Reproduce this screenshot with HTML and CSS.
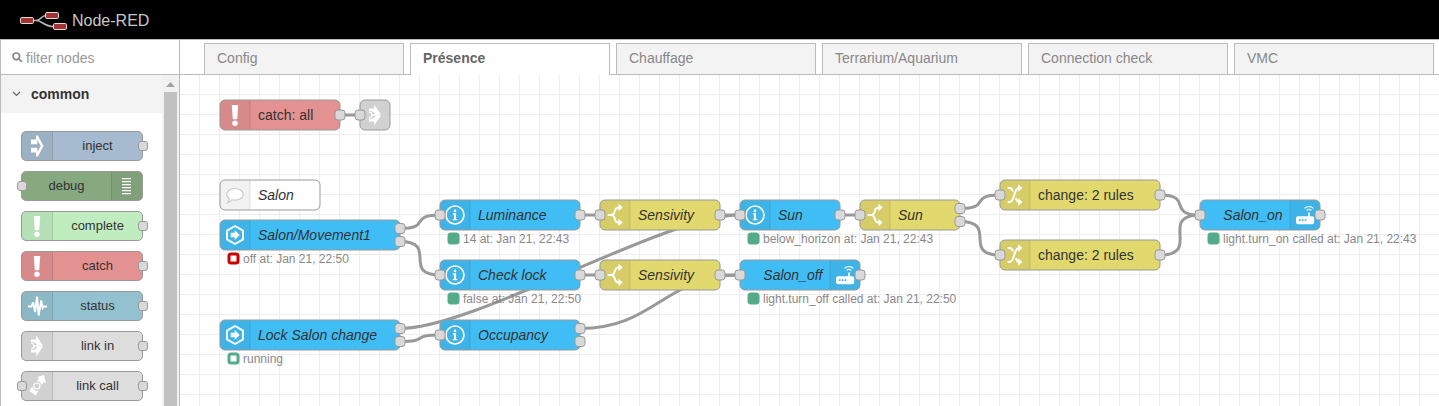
FILE: index.html
```html
<!DOCTYPE html>
<html lang="en">
<head>
<meta charset="utf-8">
<title>Node-RED</title>
<link rel="stylesheet" href="styles.css">
</head>
<body>
<svg class="defs" width="0" height="0" aria-hidden="true">
  <symbol id="i-inject" viewBox="0 0 30 30"><path fill-rule="evenodd" d="M9 8.500H14V4.500h1.800L21.500 15 15.800 25.500H14V21.500H9V16.800H15.300V21L18.900 15 15.300 9V13.200H9z"/></symbol>
  <symbol id="i-debug" viewBox="0 0 30 30"><path d="M10 7h9v1.200h-9zM10 10h9v1.200h-9zM10 13h9v1.200h-9zM10 16h9v1.200h-9zM10 19h9v1.200h-9zM10 22h9v1.200h-9z"/></symbol>
  <symbol id="i-bang" viewBox="0 0 30 30"><path d="M11.800 5h6.400l-1 14.200h-4.400z"/><circle cx="15" cy="23.300" r="2.700"/></symbol>
  <symbol id="i-status" viewBox="0 0 30 30"><path class="ln" stroke-width="1.900" stroke-linejoin="miter" stroke-miterlimit="3" d="M6 15.500h3.500l1.800-4 1.800 9.500 2-15.500 1.500 19 2.600-15 1.400 7.500 1-1.500h3.400"/></symbol>
  <symbol id="i-link" viewBox="0 0 30 30"><path d="M9 8.500h5.300v-4L20.700 14.300H15.300C14.700 12 12.500 10.900 9 10.900zM9 21.500h5.300v4L20.700 15.700H15.300C14.700 18 12.500 19.100 9 19.100z"/><path class="ln" stroke-width="1.300" d="M9 12.100a2.900 2.900 0 0 1 0 5.800M11.900 15h8.500"/></symbol>
  <symbol id="i-call" viewBox="0 0 30 30"><path d="M14.700 6.200l7.300-2.200 2 8.200-2.200-1.200-2.300 3.600a4.800 4.800 0 0 0-4.600-4.400l2.300-3.100zM7.500 20l2.900-4.700a4.700 4.700 0 0 0 6.100 4.200L13.700 24.600z"/><circle class="ln" stroke-width="1.200" cx="14.900" cy="15" r="3"/></symbol>
  <symbol id="i-comment" viewBox="0 0 30 30"><path fill="#fff" stroke="#ccc" stroke-width="1.200" d="M15 8.500c4.500 0 8.300 2.500 8.300 5.800s-3.800 5.800-8.300 5.800c-1 0-2-.1-2.800-.4-1 1.400-2.800 3-4.800 3.300 1-1.300 1.700-2.700 1.800-4.500-1.500-1-2.500-2.500-2.500-4.200 0-3.300 3.800-5.800 8.300-5.800z"/></symbol>
  <symbol id="i-hex" viewBox="0 0 30 30"><path class="ln" stroke-width="2" stroke-linejoin="round" d="M15 6l8 4.600v8.800L15 24l-8-4.600v-8.800z"/><path d="M10.700 12.700h4V10l5 5-5 5v-2.700h-4z"/></symbol>
  <symbol id="i-info" viewBox="0 0 30 30"><circle class="ln" stroke-width="1.600" cx="15" cy="15" r="9"/><circle cx="15" cy="10.900" r="1.300"/><path d="M12.800 13.300h3.300v5.600h1.200v1.300h-4.600v-1.300h1.200v-4.300h-1.100z"/></symbol>
  <symbol id="i-switch" viewBox="0 0 30 30"><path class="ln" stroke-width="2" d="M7.700 15H12c2.600-1 2.600-3 3.100-4.700.5-1.900 1.400-2.800 4-2.800M12 15c2.600 1 2.600 3 3.100 4.700.5 1.900 1.400 2.800 4 2.800"/><path d="M18.500 3.700l4.200 3.800-4.200 3.800zM18.500 18.700l4.200 3.800-4.200 3.800z"/></symbol>
  <symbol id="i-change" viewBox="0 0 30 30"><path class="ln" stroke-width="2" d="M7.700 8H9.500c2 0 3 1.500 3.500 3.500M16 18c.5 2.500 1.200 4 3.200 4M7.700 22H9.500c5.500 0 4-14 9.500-14"/><path d="M18.200 4.200l4.200 3.800-4.200 3.800zM18.200 18.200l4.200 3.800-4.200 3.800z"/></symbol>
  <symbol id="i-router" viewBox="0 0 30 30"><path fill-rule="evenodd" d="M8 16.300h10.200V12.500h1.600v3.800h2.400a2 2 0 0 1 2 2v4a2 2 0 0 1-2 2H8a2 2 0 0 1-2-2v-4a2 2 0 0 1 2-2zM8.900 19.300v1.700h1.700v-1.700zM11.800 19.300v1.700h1.700v-1.700zM14.700 19.300v1.700h1.700v-1.700z"/><path class="ln" stroke-width="1.100" d="M16.600 10.500a3.200 3.200 0 0 1 4.800 0M14.500 8.400a6.200 6.200 0 0 1 9 0"/></symbol>
</svg>

<header class="header">
  <svg class="logo" width="48" height="20" viewBox="0 0 48 20">
    <path class="logo-wire" d="M13 10.500h3c5 0 5-5 10-5M16 10.500c7 0 7 6 18 6"/>
    <g class="logo-box">
      <rect x="0.500" y="7.500" width="13" height="6" rx="1.300"/>
      <rect x="25.500" y="2.500" width="13" height="6" rx="1.300"/>
      <rect x="33.500" y="13.500" width="13" height="6" rx="1.300"/>
    </g>
  </svg>
  <span class="brand">Node-RED</span>
</header>

<div class="main">
  <aside class="palette">
    <div class="search">
      <svg width="11" height="11" viewBox="0 0 11 11"><circle cx="4.300" cy="4.300" r="3.300"/><path d="M6.800 6.800l3 3"/></svg>
      <span>filter nodes</span>
    </div>
    <div class="palette-body">
      <div class="palette-list">
        <div class="category">
          <svg width="9" height="6" viewBox="0 0 9 6"><path d="M1 1l3.500 3.500L8 1"/></svg>
          <span>common</span>
        </div>
        <div class="items">
          <div class="item inject"><span class="ic"><svg><use href="#i-inject"/></svg></span><span class="lb">inject</span><i class="port out"></i></div>
          <div class="item debug"><span class="lb">debug</span><span class="ic right"><svg><use href="#i-debug"/></svg></span><i class="port in"></i></div>
          <div class="item complete"><span class="ic"><svg><use href="#i-bang"/></svg></span><span class="lb">complete</span><i class="port out"></i></div>
          <div class="item catch"><span class="ic"><svg><use href="#i-bang"/></svg></span><span class="lb">catch</span><i class="port out"></i></div>
          <div class="item status"><span class="ic"><svg><use href="#i-status"/></svg></span><span class="lb">status</span><i class="port out"></i></div>
          <div class="item link"><span class="ic"><svg><use href="#i-link"/></svg></span><span class="lb">link in</span><i class="port out"></i></div>
          <div class="item link"><span class="ic"><svg><use href="#i-call"/></svg></span><span class="lb">link call</span><i class="port in"></i><i class="port out"></i></div>
        </div>
      </div>
      <div class="scrollbar"><svg width="9" height="5" viewBox="0 0 9 5"><path d="M4.500 0L9 5H0z"/></svg><div class="thumb"></div></div>
    </div>
  </aside>

  <section class="workspace">
    <nav class="tabs">
      <div class="tab">Config</div>
      <div class="tab active">Présence</div>
      <div class="tab">Chauffage</div>
      <div class="tab">Terrarium/Aquarium</div>
      <div class="tab">Connection check</div>
      <div class="tab">VMC</div>
    </nav>
    <svg class="canvas" width="1259" height="331" viewBox="180 75 1259 331">
      <defs>
        <pattern id="grid" x="180" y="75" width="20" height="20" patternUnits="userSpaceOnUse"><path class="grid" d="M19 0h1v20h-1zM0 19h19v1H0z"/></pattern>
      </defs>
      <rect x="180" y="75" width="1259" height="331" fill="url(#grid)"/>
      <g class="wires">
        <path d="M340 115C355 115 345 115 360 115"/>
        <path d="M400 228.500C431.600 228.500 408.400 215 440 215"/>
        <path d="M400 241.500C439 241.500 401 275 440 275"/>
        <path d="M400 328.500C475 328.500 665 215 740 215"/>
        <path d="M400 341.500C430.400 341.500 409.600 335 440 335"/>
        <path d="M580 215H600M580 275H600M720 215H740M720 275H740M840 215H860"/>
        <path d="M580 328.500C655 328.500 665 275 740 275"/>
        <path d="M960 208.500C991.600 208.500 968.400 195 1000 195"/>
        <path d="M960 221.500C999 221.500 961 255 1000 255"/>
        <path d="M1160 195C1193.500 195 1166.500 215 1200 215"/>
        <path d="M1160 255C1202.400 255 1157.600 215 1200 215"/>
      </g>

      <g class="node" transform="translate(220 100)">
        <rect class="box c-catch" width="120" height="30" rx="5"/><path class="shade" d="M5 .5H30v29H5A4.500 4.500 0 0 1 .5 25V5A4.500 4.500 0 0 1 5 .5z"/><path class="sep" d="M30 .5v29"/>
        <use href="#i-bang" width="30" height="30"/><text x="38" y="20">catch: all</text>
        <rect class="pt" x="115" y="10" width="10" height="10" rx="3"/>
      </g>
      <g class="node" transform="translate(360 100)">
        <rect class="box c-link" width="30" height="30" rx="5"/><rect class="shade" x=".5" y=".5" width="29" height="29" rx="4.500"/>
        <use href="#i-link" width="30" height="30"/>
        <rect class="pt" x="-5" y="10" width="10" height="10" rx="3"/>
      </g>
      <g class="node named" transform="translate(220 180)">
        <rect class="box c-comment" width="100" height="30" rx="5"/><path class="shade" d="M5 .5H30v29H5A4.500 4.500 0 0 1 .5 25V5A4.500 4.500 0 0 1 5 .5z"/><path class="sep" d="M30 .5v29"/>
        <use href="#i-comment" width="30" height="30"/><text x="38" y="20">Salon</text>
      </g>
      <g class="node named" transform="translate(220 220)">
        <rect class="box c-ha" width="180" height="30" rx="5"/><path class="shade" d="M5 .5H30v29H5A4.500 4.500 0 0 1 .5 25V5A4.500 4.500 0 0 1 5 .5z"/><path class="sep" d="M30 .5v29"/>
        <use href="#i-hex" width="30" height="30"/><text x="38" y="20">Salon/Movement1</text>
        <rect class="pt" x="175" y="3.500" width="10" height="10" rx="3"/><rect class="pt" x="175" y="16.500" width="10" height="10" rx="3"/>
        <rect class="dot ring red" x="9" y="34" width="9" height="9" rx="2"/><text class="st" x="23" y="43">off at: Jan 21, 22:50</text>
      </g>
      <g class="node named" transform="translate(220 320)">
        <rect class="box c-ha" width="180" height="30" rx="5"/><path class="shade" d="M5 .5H30v29H5A4.500 4.500 0 0 1 .5 25V5A4.500 4.500 0 0 1 5 .5z"/><path class="sep" d="M30 .5v29"/>
        <use href="#i-hex" width="30" height="30"/><text x="38" y="20">Lock Salon change</text>
        <rect class="pt" x="175" y="3.500" width="10" height="10" rx="3"/><rect class="pt" x="175" y="16.500" width="10" height="10" rx="3"/>
        <rect class="dot ring" x="9" y="34" width="9" height="9" rx="2"/><text class="st" x="23" y="43">running</text>
      </g>
      <g class="node named" transform="translate(440 200)">
        <rect class="box c-ha" width="140" height="30" rx="5"/><path class="shade" d="M5 .5H30v29H5A4.500 4.500 0 0 1 .5 25V5A4.500 4.500 0 0 1 5 .5z"/><path class="sep" d="M30 .5v29"/>
        <use href="#i-info" width="30" height="30"/><text x="38" y="20">Luminance</text>
        <rect class="pt" x="-5" y="10" width="10" height="10" rx="3"/><rect class="pt" x="135" y="10" width="10" height="10" rx="3"/>
        <rect class="dot" x="9" y="34" width="9" height="9" rx="2"/><text class="st" x="23" y="43">14 at: Jan 21, 22:43</text>
      </g>
      <g class="node named" transform="translate(440 260)">
        <rect class="box c-ha" width="140" height="30" rx="5"/><path class="shade" d="M5 .5H30v29H5A4.500 4.500 0 0 1 .5 25V5A4.500 4.500 0 0 1 5 .5z"/><path class="sep" d="M30 .5v29"/>
        <use href="#i-info" width="30" height="30"/><text x="38" y="20">Check lock</text>
        <rect class="pt" x="-5" y="10" width="10" height="10" rx="3"/><rect class="pt" x="135" y="10" width="10" height="10" rx="3"/>
        <rect class="dot" x="9" y="34" width="9" height="9" rx="2"/><text class="st" x="23" y="43">false at: Jan 21, 22:50</text>
      </g>
      <g class="node named" transform="translate(440 320)">
        <rect class="box c-ha" width="140" height="30" rx="5"/><path class="shade" d="M5 .5H30v29H5A4.500 4.500 0 0 1 .5 25V5A4.500 4.500 0 0 1 5 .5z"/><path class="sep" d="M30 .5v29"/>
        <use href="#i-info" width="30" height="30"/><text x="38" y="20">Occupancy</text>
        <rect class="pt" x="-5" y="10" width="10" height="10" rx="3"/><rect class="pt" x="135" y="3.500" width="10" height="10" rx="3"/><rect class="pt" x="135" y="16.500" width="10" height="10" rx="3"/>
      </g>
      <g class="node named" transform="translate(600 200)">
        <rect class="box c-fn" width="120" height="30" rx="5"/><path class="shade" d="M5 .5H30v29H5A4.500 4.500 0 0 1 .5 25V5A4.500 4.500 0 0 1 5 .5z"/><path class="sep" d="M30 .5v29"/>
        <use href="#i-switch" width="30" height="30"/><text x="38" y="20">Sensivity</text>
        <rect class="pt" x="-5" y="10" width="10" height="10" rx="3"/><rect class="pt" x="115" y="10" width="10" height="10" rx="3"/>
      </g>
      <g class="node named" transform="translate(600 260)">
        <rect class="box c-fn" width="120" height="30" rx="5"/><path class="shade" d="M5 .5H30v29H5A4.500 4.500 0 0 1 .5 25V5A4.500 4.500 0 0 1 5 .5z"/><path class="sep" d="M30 .5v29"/>
        <use href="#i-switch" width="30" height="30"/><text x="38" y="20">Sensivity</text>
        <rect class="pt" x="-5" y="10" width="10" height="10" rx="3"/><rect class="pt" x="115" y="10" width="10" height="10" rx="3"/>
      </g>
      <g class="node named" transform="translate(740 200)">
        <rect class="box c-ha" width="100" height="30" rx="5"/><path class="shade" d="M5 .5H30v29H5A4.500 4.500 0 0 1 .5 25V5A4.500 4.500 0 0 1 5 .5z"/><path class="sep" d="M30 .5v29"/>
        <use href="#i-info" width="30" height="30"/><text x="38" y="20">Sun</text>
        <rect class="pt" x="-5" y="10" width="10" height="10" rx="3"/><rect class="pt" x="95" y="10" width="10" height="10" rx="3"/>
        <rect class="dot" x="9" y="34" width="9" height="9" rx="2"/><text class="st" x="23" y="43">below_horizon at: Jan 21, 22:43</text>
      </g>
      <g class="node named" transform="translate(740 260)">
        <rect class="box c-ha" width="120" height="30" rx="5"/><path class="shade" d="M90 .5h25a4.500 4.500 0 0 1 4.500 4.500v20a4.500 4.500 0 0 1-4.500 4.500H90z"/><path class="sep" d="M90 .5v29"/>
        <use href="#i-router" x="90" width="30" height="30"/><text class="end" x="82.500" y="20">Salon_off</text>
        <rect class="pt" x="-5" y="10" width="10" height="10" rx="3"/><rect class="pt" x="115" y="10" width="10" height="10" rx="3"/>
        <rect class="dot" x="9" y="34" width="9" height="9" rx="2"/><text class="st" x="23" y="43">light.turn_off called at: Jan 21, 22:50</text>
      </g>
      <g class="node named" transform="translate(860 200)">
        <rect class="box c-fn" width="100" height="30" rx="5"/><path class="shade" d="M5 .5H30v29H5A4.500 4.500 0 0 1 .5 25V5A4.500 4.500 0 0 1 5 .5z"/><path class="sep" d="M30 .5v29"/>
        <use href="#i-switch" width="30" height="30"/><text x="38" y="20">Sun</text>
        <rect class="pt" x="-5" y="10" width="10" height="10" rx="3"/><rect class="pt" x="95" y="3.500" width="10" height="10" rx="3"/><rect class="pt" x="95" y="16.500" width="10" height="10" rx="3"/>
      </g>
      <g class="node" transform="translate(1000 180)">
        <rect class="box c-fn" width="160" height="30" rx="5"/><path class="shade" d="M5 .5H30v29H5A4.500 4.500 0 0 1 .5 25V5A4.500 4.500 0 0 1 5 .5z"/><path class="sep" d="M30 .5v29"/>
        <use href="#i-change" width="30" height="30"/><text x="38" y="20">change: 2 rules</text>
        <rect class="pt" x="-5" y="10" width="10" height="10" rx="3"/><rect class="pt" x="155" y="10" width="10" height="10" rx="3"/>
      </g>
      <g class="node" transform="translate(1000 240)">
        <rect class="box c-fn" width="160" height="30" rx="5"/><path class="shade" d="M5 .5H30v29H5A4.500 4.500 0 0 1 .5 25V5A4.500 4.500 0 0 1 5 .5z"/><path class="sep" d="M30 .5v29"/>
        <use href="#i-change" width="30" height="30"/><text x="38" y="20">change: 2 rules</text>
        <rect class="pt" x="-5" y="10" width="10" height="10" rx="3"/><rect class="pt" x="155" y="10" width="10" height="10" rx="3"/>
      </g>
      <g class="node named" transform="translate(1200 200)">
        <rect class="box c-ha" width="120" height="30" rx="5"/><path class="shade" d="M90 .5h25a4.500 4.500 0 0 1 4.500 4.500v20a4.500 4.500 0 0 1-4.500 4.500H90z"/><path class="sep" d="M90 .5v29"/>
        <use href="#i-router" x="90" width="30" height="30"/><text class="end" x="82.500" y="20">Salon_on</text>
        <rect class="pt" x="-5" y="10" width="10" height="10" rx="3"/><rect class="pt" x="115" y="10" width="10" height="10" rx="3"/>
        <rect class="dot" x="9" y="34" width="9" height="9" rx="2"/><text class="st" x="23" y="43">light.turn_on called at: Jan 21, 22:43</text>
      </g>
    </svg>
  </section>
</div>
</body>
</html>
```
FILE: styles.css
```css
* { box-sizing: border-box; }
body {
  margin: 0;
  height: 406px;
  overflow: hidden;
  display: flex;
  flex-direction: column;
  background: #fff;
  font: 14px/20px "Liberation Sans", Arial, sans-serif;
  color: #333;
}
.defs { position: absolute; }
.header {
  height: 39px;
  flex: none;
  display: flex;
  align-items: center;
  padding: 1px 0 0 20px;
  background: #000;
}
.logo { display: block; }
.logo-wire { fill: none; stroke: #bbb; stroke-width: 1.700; }
.logo-box { fill: #a33232; stroke: #ddd; stroke-width: 1; }
.brand { margin-left: 4px; padding-top: 1px; font-size: 16px; color: #c7c7c7; }

.main { flex: 1; min-height: 0; display: flex; border-top: 1px solid #bbb; }
.palette {
  width: 180px;
  flex: none;
  display: flex;
  flex-direction: column;
  border: solid #bbb;
  border-width: 0 1px;
}
.search {
  height: 35px;
  flex: none;
  display: flex;
  align-items: center;
  gap: 3px;
  padding: 1px 0 0 11px;
  border-bottom: 1px solid #bbb;
  color: #999;
}
.search svg { fill: none; stroke: #888; stroke-width: 1.700; }
.palette-body { flex: 1; min-height: 0; display: flex; overflow: hidden; }
.palette-list { width: 161px; }
.category {
  height: 38px;
  display: flex;
  align-items: center;
  gap: 10px;
  padding-left: 11px;
  background: #f3f3f3;
  font-weight: bold;
}
.category svg { fill: none; stroke: #666; stroke-width: 1.200; }
.items { display: flex; flex-direction: column; gap: 10px; padding: 18px 0 0 20px; }
.item {
  position: relative;
  width: 122px;
  height: 30px;
  flex: none;
  display: flex;
  border: 1px solid #999;
  border-radius: 5px;
  font-size: 13px;
}
.lb { flex: 1; text-align: center; line-height: 28px; }
.ic {
  width: 31px;
  background: rgba(0, 0, 0, .05);
  border-right: 1px solid rgba(0, 0, 0, .1);
  border-radius: 4px 0 0 4px;
}
.ic.right { border-right: 0; border-left: 1px solid rgba(0, 0, 0, .1); border-radius: 0 4px 4px 0; }
.ic svg { display: block; width: 30px; height: 30px; margin-top: -1px; fill: #fff; }
.port {
  position: absolute;
  top: 9px;
  width: 10px;
  height: 10px;
  background: #d9d9d9;
  border: 1px solid #999;
  border-radius: 3px;
}
.port.out { right: -6px; }
.port.in { left: -5px; }
.inject { background: #a6bbcf; }
.debug { background: #87a980; }
.complete { background: #c0edc0; }
.catch { background: #e49191; }
.status { background: #94c1d0; }
.link { background: #ddd; }

.scrollbar {
  width: 17px;
  display: flex;
  flex-direction: column;
  align-items: center;
  gap: 5px;
  padding-top: 7px;
  background: #f1f1f1;
}
.scrollbar svg { flex: none; fill: #a3a3a3; }
.thumb { width: 13px; flex: 1; background: #c1c1c1; }

.workspace { flex: 1; min-width: 0; display: flex; flex-direction: column; }
.tabs {
  height: 35px;
  flex: none;
  display: flex;
  gap: 6px;
  padding: 3px 0 0 24px;
  border-bottom: 1px solid #bbb;
}
.tab {
  width: 200px;
  height: 31px;
  flex: none;
  padding-left: 12px;
  line-height: 29px;
  background: #f3f3f3;
  border: 1px solid #bbb;
  border-bottom: 0;
  color: #888;
}
.tab.active { height: 32px; background: #fff; color: #666; font-weight: bold; }
.canvas { display: block; flex: none; }

.ln { fill: none; stroke: #fff; }
.grid { fill: #eee; }
.wires path { fill: none; stroke: #999; stroke-width: 3; }
.node { fill: #fff; }
.box { stroke: #999; stroke-width: 1; }
.c-catch { fill: #e49191; }
.c-link { fill: #ddd; }
.c-comment { fill: #fff; }
.c-ha { fill: #41bdf5; }
.c-fn { fill: #e2d96e; }
.shade { fill: #000; fill-opacity: .05; }
.sep { stroke: #000; stroke-opacity: .1; }
.pt { fill: #d9d9d9; stroke: #999; }
.node text { fill: #333; font-size: 14px; }
.named text { font-style: italic; }
.node .end { text-anchor: end; }
.node .st { fill: #888; font-size: 12px; font-style: normal; }
.dot { fill: #5a8; stroke: #5a8; stroke-width: 3; }
.dot.ring { fill: #fff; }
.dot.red { stroke: #c00; }
```
